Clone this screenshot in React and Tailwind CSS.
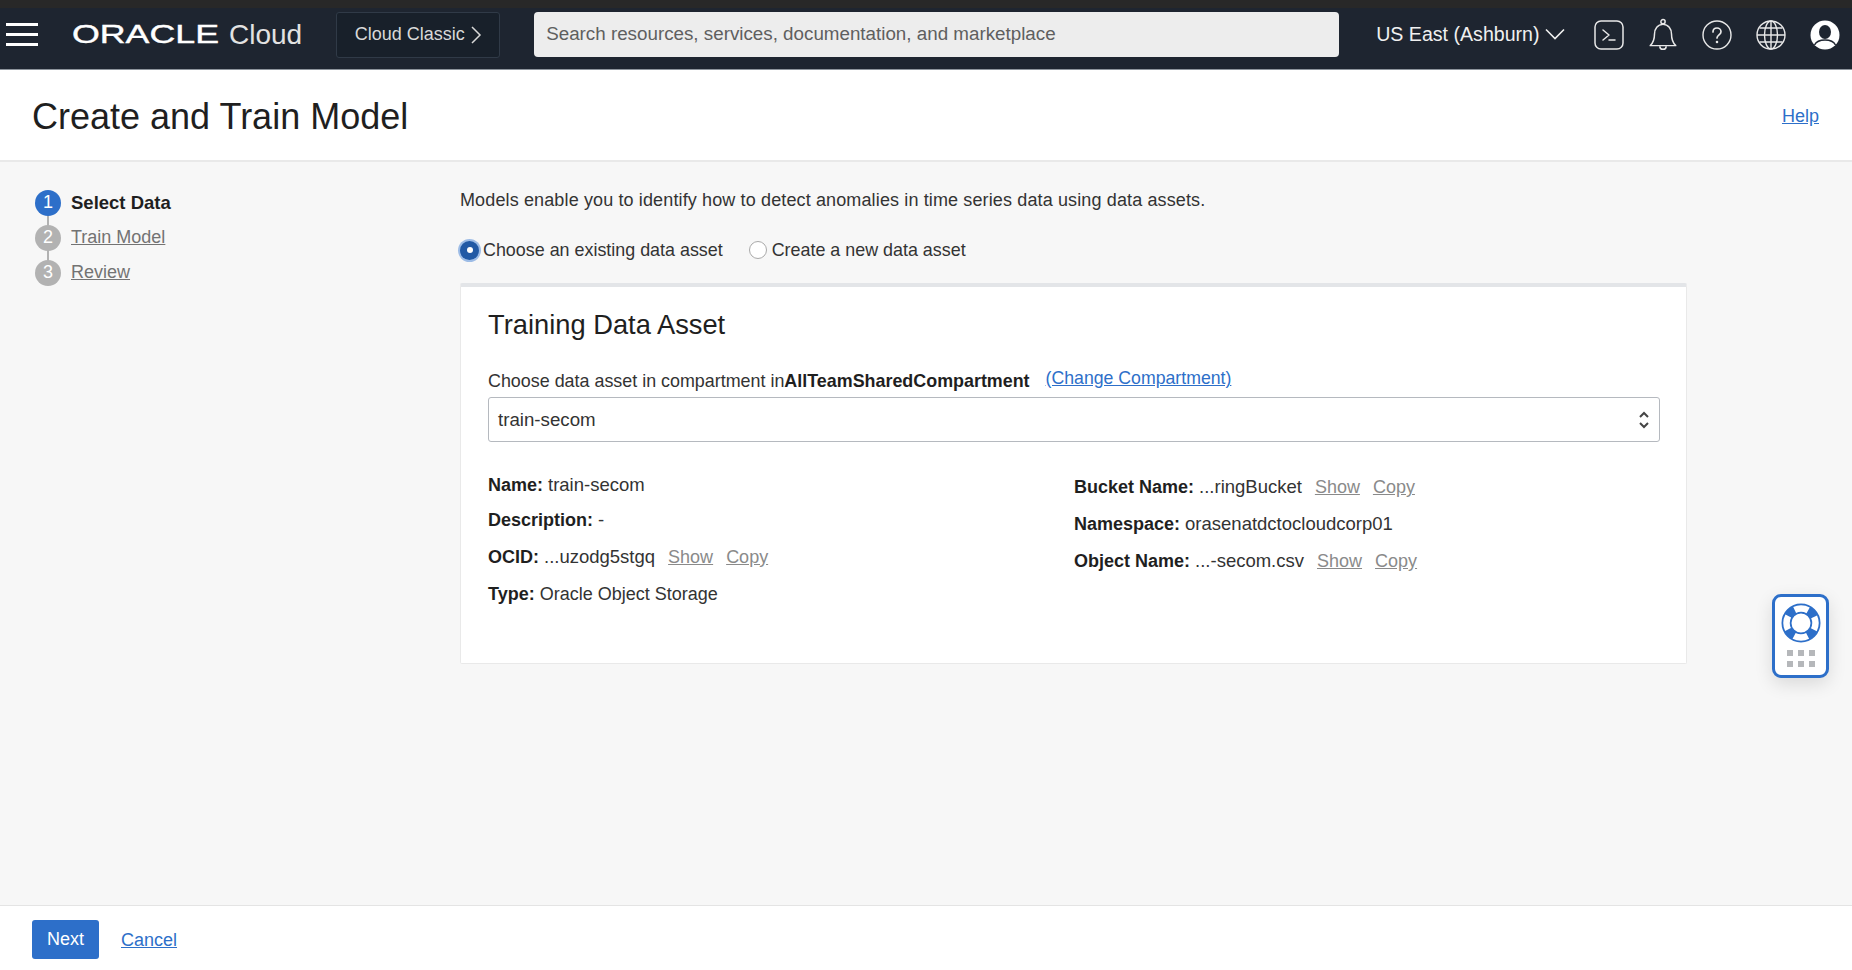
import React from "react";

function Terminal() {
  return (
    <svg width="30" height="30" viewBox="0 0 30 30" fill="none" stroke="#e8e8e8" strokeWidth="1.5" strokeLinecap="round" strokeLinejoin="round">
      <rect x="1" y="1" width="28" height="28" rx="6" />
      <path d="M9 10l6 5-6 5M15 20h6" />
    </svg>
  );
}
function Bell() {
  return (
    <svg width="30" height="34" viewBox="0 0 28 32" fill="none" stroke="#e8e8e8" strokeWidth="1.4" strokeLinejoin="round">
      <path d="M2 26c3-3 4-6 4-11 0-5 3-9 8-9s8 4 8 9c0 5 1 8 4 11z" />
      <circle cx="14" cy="3.5" r="2" />
      <path d="M11 26.5a3 3 0 0 0 6 0" />
    </svg>
  );
}
function Question() {
  return (
    <svg width="30" height="30" viewBox="0 0 30 30" fill="none" stroke="#e8e8e8" strokeWidth="1.4" strokeLinecap="round">
      <circle cx="15" cy="15" r="14" />
      <path d="M11 12c0-2.500 1.800-4 4-4s4 1.500 4 3.700c0 3-4 3.300-4 6.300" strokeWidth="1.700" />
      <circle cx="15" cy="22" r="0.6" fill="#e8e8e8" />
    </svg>
  );
}
function Globe() {
  return (
    <svg width="30" height="30" viewBox="0 0 30 30" fill="none" stroke="#e8e8e8" strokeWidth="1.4">
      <circle cx="15" cy="15" r="14" />
      <ellipse cx="15" cy="15" rx="6.500" ry="14" />
      <path d="M15 1v28M1 15h28M3.500 8h23M3.500 22h23" />
    </svg>
  );
}
function User() {
  return (
    <svg width="30" height="30" viewBox="0 0 30 30">
      <circle cx="15" cy="15" r="14.500" fill="#fff" />
      <ellipse cx="15" cy="12" rx="6" ry="7" fill="#1e2530" />
      <path d="M4.500 25c2-4 6-5 10.500-5s8.500 1 10.500 5" fill="none" stroke="#1e2530" strokeWidth="1.500" />
    </svg>
  );
}
function Buoy() {
  return (
    <svg width="40" height="40" viewBox="0 0 40 40" fill="none">
      <circle cx="20" cy="20" r="14.500" stroke="#2d6fc9" strokeWidth="10" />
      <circle cx="20" cy="20" r="14.500" stroke="#fff" strokeWidth="6.500" strokeDasharray="14 8.780" strokeDashoffset="7" />
    </svg>
  );
}

function Step({ n, label, active }) {
  return (
    <div className="flex items-center h-[35px] relative">
      <span className={`w-[26px] h-[26px] rounded-full flex items-center justify-center text-[18px] text-white ${active ? "bg-[#2d6fc9]" : "bg-[#b2b2b2]"}`}>{n}</span>
      <span className={`ml-[10px] ${active ? "text-[18.500px] font-bold text-[#1f1f1f]" : "text-[18px] underline text-[#737373]"}`}>{label}</span>
    </div>
  );
}

function ActionLink({ children, className = "" }) {
  return <span className={`underline text-[#8a8a8a] ${className}`}>{children}</span>;
}

function Field({ label, value, actions, className = "", valueClass = "text-[18.500px]" }) {
  return (
    <div className={`flex items-baseline whitespace-pre ${className}`}>
      <span className="font-bold text-[#1f1f1f]">{label}</span>
      <span className={`ml-[5px] text-[#333] ${valueClass}`}>{value}</span>
      {actions && <ActionLink className="ml-[13px]">Show</ActionLink>}
      {actions && <ActionLink className="ml-[13px]">Copy</ActionLink>}
    </div>
  );
}

export default function App() {
  return (
    <div className="relative flex flex-col h-[970px] overflow-hidden bg-[#f7f7f7] font-['Liberation_Sans',Arial,sans-serif] text-[18px] text-[#333]">
      <div className="h-[8px] bg-[#282828]" />
      <nav className="h-[62px] pb-[8px] bg-[#1e2530] flex items-center shrink-0 border-b border-[#8d949c]">
        <div className="ml-[6px] w-[32px] flex flex-col gap-[7px]">
          <span className="h-[3px] bg-white" />
          <span className="h-[3px] bg-white" />
          <span className="h-[3px] bg-white" />
        </div>
        <div className="ml-[34px] w-[157px] h-[30px] flex items-center">
          <span className="inline-block origin-left scale-x-[1.43] text-[25px] leading-none text-white [-webkit-text-stroke:0.4px_white]">ORACLE</span>
        </div>
        <span className="text-[28px] leading-none text-[#e2e2e2]">Cloud</span>
        <div className="ml-[34px] w-[164px] h-[46px] bg-[#18202a] border border-[#303a47] rounded-[3px] flex items-center justify-center gap-[5px] text-[#d9d9d9]">
          Cloud Classic
          <svg width="12" height="20" viewBox="0 0 12 20" fill="none" stroke="#d9d9d9" strokeWidth="1.500"><path d="M2 2l8 8-8 8" /></svg>
        </div>
        <div className="ml-[34px] w-[805px] h-[45px] bg-[#ededed] rounded-[4px] flex items-center pl-[12px] text-[18.800px] text-[#5f5f5f]">
          Search resources, services, documentation, and marketplace
        </div>
        <div className="ml-[37px] flex items-center text-[#f0f0f0] text-[19.600px] whitespace-nowrap">
          US East (Ashburn)
          <svg className="ml-[5px]" width="20" height="12" viewBox="0 0 20 12" fill="none" stroke="#f0f0f0" strokeWidth="1.600"><path d="M1 1.500l9 9 9-9" /></svg>
        </div>
        <div className="ml-[29px] flex items-center gap-[24px]">
          <Terminal /><Bell /><Question /><Globe /><User />
        </div>
      </nav>

      <header className="h-[92px] pt-[3px] shrink-0 bg-white border-b-2 border-[#e9e9e9] flex items-center justify-between pl-[32px] pr-[33px]">
        <h1 className="text-[36px] text-[#1f1f1f] font-normal">Create and Train Model</h1>
        <a className="text-[#2d6fc9] underline">Help</a>
      </header>

      <main className="flex-1 flex min-h-0">
        <aside className="w-[460px] shrink-0 pl-[35px] pt-[23px]">
          <div className="relative">
            <span className="absolute left-[12px] top-[20px] w-[2px] h-[66px] bg-[#b2b2b2]" />
            <div className="relative flex flex-col">
              <Step n="1" label="Select Data" active />
              <Step n="2" label="Train Model" />
              <Step n="3" label="Review" />
            </div>
          </div>
        </aside>
        <section className="w-[1227px] pt-[27px]">
          <p className="leading-[22px] tracking-[0.13px]">Models enable you to identify how to detect anomalies in time series data using data assets.</p>
          <div className="mt-[28px] flex items-center h-[22px] text-[17.900px]">
            <span className="w-[19px] h-[19px] rounded-full bg-[#2159a5] ring-2 ring-[#9dbce6] flex items-center justify-center">
              <span className="w-[6px] h-[6px] rounded-full bg-white" />
            </span>
            <span className="ml-[4px]">Choose an existing data asset</span>
            <span className="ml-[26px] w-[18px] h-[18px] rounded-full bg-white border border-[#a9a9a9]" />
            <span className="ml-[5px]">Create a new data asset</span>
          </div>
          <div className="mt-[22px] h-[381px] bg-white border border-[#e9e9e9] border-t-[4px] border-t-[#e3e5e8] rounded-[2px] pl-[27px] pr-[26px]">
            <h2 className="mt-[22px] text-[27.300px] leading-[32px] text-[#1f1f1f] font-normal">Training Data Asset</h2>
            <div className="mt-[27px] flex items-baseline h-[24px] text-[17.900px]">
              <span>Choose data asset in compartment in</span>
              <span className="font-bold text-[#1f1f1f]">AllTeamSharedCompartment</span>
              <a className="ml-[16px] text-[17.700px] text-[#2d6fc9] underline -translate-y-[3px]">(Change Compartment)</a>
            </div>
            <div className="mt-[5px] h-[45px] border border-[#b5b9bf] rounded-[3px] flex items-center justify-between pl-[9px] pr-[9px]">
              <span className="text-[18.700px] translate-y-[1px]">train-secom</span>
              <svg width="12" height="20" viewBox="0 0 12 20" fill="none" stroke="#444" strokeWidth="2"><path d="M2 7l4-4 4 4M2 13l4 4 4-4" /></svg>
            </div>
            <div className="mt-[32px] grid grid-cols-[586px_1fr]">
              <div className="flex flex-col gap-[14px] leading-[22px]">
                <Field label="Name:" value="train-secom" />
                <Field label="Description:" value="-" className="-mt-[1px]" />
                <Field label="OCID:" value="...uzodg5stgq" actions className="mt-[1px]" />
                <Field label="Type:" value="Oracle Object Storage" className="mt-[1px]" valueClass="text-[18px]" />
              </div>
              <div className="flex flex-col gap-[15px] leading-[22px] pt-[2px]">
                <Field label="Bucket Name:" value="...ringBucket" actions />
                <Field label="Namespace:" value="orasenatdctocloudcorp01" />
                <Field label="Object Name:" value="...-secom.csv" actions />
              </div>
            </div>
          </div>
        </section>
      </main>

      <footer className="h-[65px] pt-[2px] shrink-0 bg-white border-t border-[#e4e4e4] flex items-center pl-[32px]">
        <button className="w-[67px] h-[39px] bg-[#2d6fc9] rounded-[3px] text-white">Next</button>
        <a className="ml-[22px] text-[#2d6fc9] underline translate-y-[1px]">Cancel</a>
      </footer>

      <div className="absolute left-[1772px] top-[594px] w-[57px] h-[84px] bg-white border-[3px] border-[#2d6fc9] rounded-[9px] shadow-[0_6px_18px_rgba(0,0,0,0.12)] flex flex-col items-center pt-[6px]">
        <Buoy />
        <div className="mt-[7px] grid grid-cols-3 gap-x-[5px] gap-y-[5px]">
          {[0, 1, 2, 3, 4, 5].map((i) => (
            <span key={i} className="w-[6px] h-[6px] bg-[#b5b7ba]" />
          ))}
        </div>
      </div>
    </div>
  );
}
